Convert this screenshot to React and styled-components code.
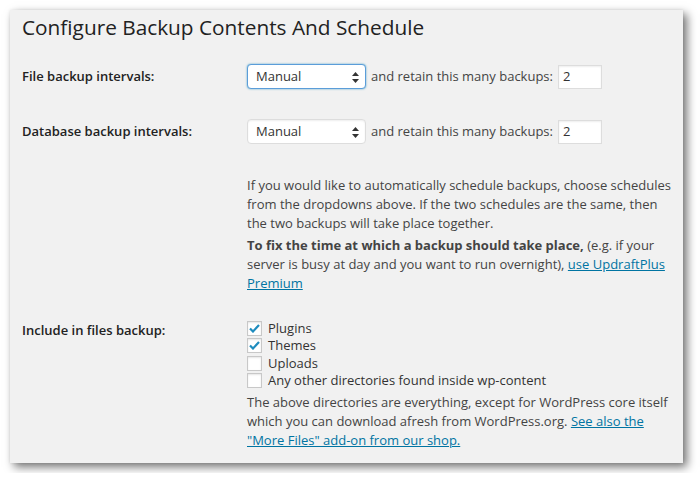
import styled, { createGlobalStyle } from 'styled-components';

const GlobalStyle = createGlobalStyle`
  body {
    margin: 0;
    background: #fff;
    font-family: 'Open Sans', 'Liberation Sans', sans-serif;
    color: #444;
  }
`;

const Panel = styled.section`
  margin: 10px;
  width: 673px;
  height: 453px;
  box-sizing: border-box;
  padding: 2px 12px 0 12px;
  background: #f1f1f1;
  box-shadow: 4px 4px 9px rgba(0, 0, 0, 0.55), 0 0 3px rgba(0, 0, 0, 0.08);
`;

const Title = styled.h2`
  margin: 0;
  font-size: 20.8px;
  font-weight: 400;
  line-height: 30px;
  color: #222;
`;

const Row = styled.div`
  display: grid;
  grid-template-columns: 225px 1fr;
  padding-top: ${props => props.$top || '0'};
`;

const Label = styled.div`
  font-size: 13px;
  font-weight: 600;
  color: #222;
  line-height: 19px;
  padding-top: ${props => props.$top || '3px'};
`;

const Field = styled.div`
  font-size: 13px;
  line-height: 19px;
  color: #444;
`;

const Inline = styled.div`
  display: flex;
  align-items: center;
  gap: 5px;
  height: 25px;
`;

const SelectBox = styled.div`
  position: relative;
  width: 119px;
  height: 25px;
  box-sizing: border-box;
  padding: 0 0 0 8px;
  display: flex;
  align-items: center;
  background: #fff;
  border: 1px solid ${props => (props.$focused ? '#5b9dd9' : '#ddd')};
  border-radius: 4px;
  box-shadow: ${props =>
    props.$focused ? '0 0 2px rgba(30, 140, 190, 0.8)' : 'inset 0 1px 2px rgba(0, 0, 0, 0.07)'};
  color: #333;
  font-size: 13px;
`;

const Arrows = styled.svg`
  position: absolute;
  right: 6px;
  top: 7px;
`;

const NumberInput = styled.div`
  width: 44px;
  height: 24px;
  box-sizing: border-box;
  border: 1px solid #ddd;
  background: #fff;
  box-shadow: inset 0 1px 2px rgba(0, 0, 0, 0.07);
  padding-left: 4px;
  display: flex;
  align-items: center;
  color: #333;
`;

const Para = styled.p`
  margin: 0 0 3px 0;
`;

const Link = styled.a`
  color: #0074a2;
  text-decoration: underline;
`;

const CheckList = styled.div`
  display: flex;
  flex-direction: column;
  margin-bottom: 3px;
`;

const CheckRow = styled.label`
  display: flex;
  align-items: center;
  gap: 6px;
  height: 17.5px;
  color: #333;
`;

const Box = styled.span`
  width: 15px;
  height: 15px;
  box-sizing: border-box;
  border: 1px solid #c8c8c8;
  background: #fff;
  box-shadow: inset 0 1px 2px rgba(0, 0, 0, 0.1);
  display: flex;
  align-items: center;
  justify-content: center;
`;

function Select({ focused }) {
  return (
    <SelectBox $focused={focused}>
      Manual
      <Arrows width="7" height="11" viewBox="0 0 7 11">
        <path d="M3.5 0 L7 4 L0 4 Z M0 7 L7 7 L3.5 11 Z" fill="#333" />
      </Arrows>
    </SelectBox>
  );
}

function Checkbox({ label, checked }) {
  return (
    <CheckRow>
      <Box>
        {checked && (
          <svg width="11" height="9" viewBox="0 0 11 9">
            <path d="M1 4.5 L4 7.5 L10 1" stroke="#1e8cbe" strokeWidth="2.2" fill="none" />
          </svg>
        )}
      </Box>
      {label}
    </CheckRow>
  );
}

function IntervalRow({ label, focused, top }) {
  return (
    <Row $top={top}>
      <Label>{label}</Label>
      <Field>
        <Inline>
          <Select focused={focused} />
          and retain this many backups:
          <NumberInput>2</NumberInput>
        </Inline>
      </Field>
    </Row>
  );
}

export default function App() {
  return (
    <>
      <GlobalStyle />
      <Panel>
        <Title>Configure Backup Contents And Schedule</Title>
        <IntervalRow label="File backup intervals:" focused top="22px" />
        <IntervalRow label="Database backup intervals:" top="30px" />
        <Row $top="32px">
          <div />
          <Field>
            <Para>
              If you would like to automatically schedule backups, choose schedules from the
              dropdowns above. If the two schedules are the same, then the two backups will take
              place together.
            </Para>
            <Para>
              <strong>To fix the time at which a backup should take place,</strong> (e.g. if your
              server is busy at day and you want to run overnight),{' '}
              <Link href="#">use UpdraftPlus Premium</Link>
            </Para>
          </Field>
        </Row>
        <Row $top="23.5px">
          <Label $top="1px">Include in files backup:</Label>
          <Field>
            <CheckList>
              <Checkbox label="Plugins" checked />
              <Checkbox label="Themes" checked />
              <Checkbox label="Uploads" />
              <Checkbox label="Any other directories found inside wp-content" />
            </CheckList>
            <Para>
              The above directories are everything, except for WordPress core itself which you can
              download afresh from WordPress.org.{' '}
              <Link href="#">See also the "More Files" add-on from our shop.</Link>
            </Para>
          </Field>
        </Row>
      </Panel>
    </>
  );
}
